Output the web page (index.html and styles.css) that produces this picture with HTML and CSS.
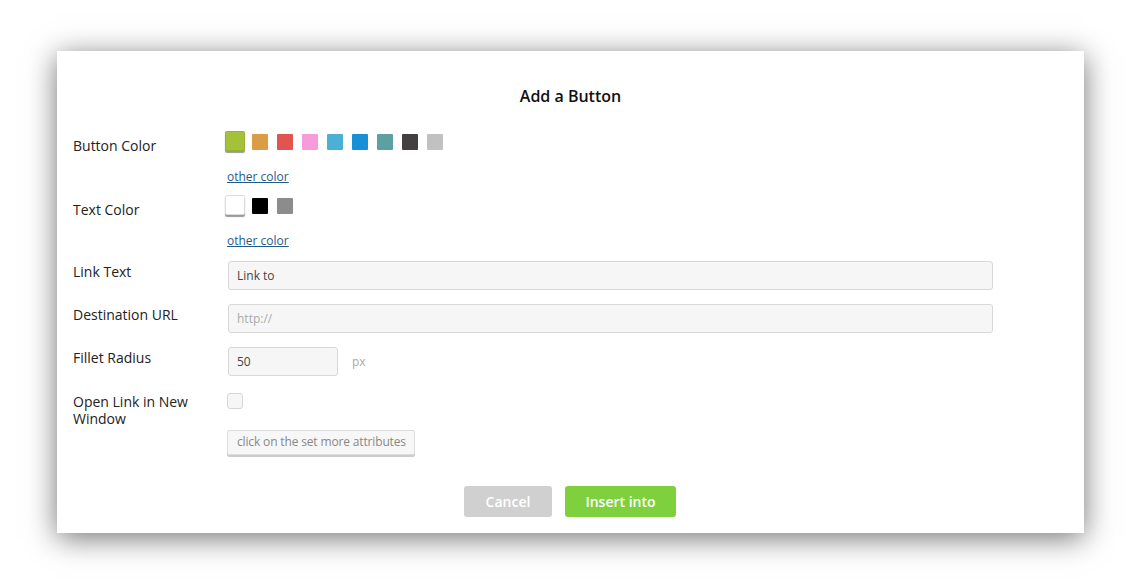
FILE: index.html
```html
<!DOCTYPE html>
<html>
<head>
<meta charset="utf-8">
<link rel="stylesheet" href="styles.css">
</head>
<body>
<div class="dialog">
  <h1 class="title">Add a Button</h1>
  <div class="row row-color">
    <div class="label">Button Color</div>
    <div class="field">
      <div class="swatches">
        <span class="sw selected" style="background:#a5c13a"></span>
        <span class="sw" style="background:#db9c45"></span>
        <span class="sw" style="background:#e1544f"></span>
        <span class="sw" style="background:#f79cdb"></span>
        <span class="sw" style="background:#4cb0d4"></span>
        <span class="sw" style="background:#1790d8"></span>
        <span class="sw" style="background:#5ea0a2"></span>
        <span class="sw" style="background:#444041"></span>
        <span class="sw" style="background:#c1c1c1"></span>
      </div>
      <a class="other" href="#">other color</a>
    </div>
  </div>
  <div class="row row-color row-color2">
    <div class="label">Text Color</div>
    <div class="field">
      <div class="swatches">
        <span class="sw selected white" style="background:#ffffff"></span>
        <span class="sw" style="background:#000000"></span>
        <span class="sw" style="background:#8c8c8c"></span>
      </div>
      <a class="other" href="#">other color</a>
    </div>
  </div>
  <div class="row row-input first-input">
    <div class="label">Link Text</div>
    <div class="field"><div class="input">Link to</div></div>
  </div>
  <div class="row row-input">
    <div class="label">Destination URL</div>
    <div class="field"><div class="input placeholder">http://</div></div>
  </div>
  <div class="row row-input">
    <div class="label">Fillet Radius</div>
    <div class="field inline"><div class="input small">50</div><span class="unit">px</span></div>
  </div>
  <div class="row row-check">
    <div class="label multi">Open Link in New Window</div>
    <div class="field"><span class="checkbox"></span></div>
  </div>
  <div class="row row-more">
    <div class="label"></div>
    <div class="field"><span class="more">click on the set more attributes</span></div>
  </div>
  <div class="actions">
    <span class="btn cancel">Cancel</span>
    <span class="btn insert">Insert into</span>
  </div>
</div>
</body>
</html>
```

FILE: styles.css
```css
html, body {
  margin: 0;
  padding: 0;
  background: #ffffff;
}
body {
  font-family: "Open Sans", "Liberation Sans", sans-serif;
  color: #222;
  padding-top: 51px;
  padding-bottom: 52px;
}
.dialog {
  margin-left: 57px;
  width: 1027px;
  height: 482px;
  box-sizing: border-box;
  background: #fff;
  box-shadow: 0 5px 28px rgba(0, 0, 0, 0.55);
  padding: 34px 0 0 16px;
}
.title {
  margin: 0 0 0 -16px;
  font-size: 16px;
  font-weight: 600;
  line-height: 22px;
  text-align: center;
  color: #111;
}
.row {
  display: flex;
}
.label {
  width: 155px;
  flex: none;
  font-size: 14px;
  line-height: 17px;
  color: #222;
}
.field {
  flex: none;
}
.row-color {
  margin-top: 24px;
}
.row-color .label {
  padding-top: 6px;
}
.row-color2 {
  margin-top: 10px;
}
.swatches {
  display: flex;
  align-items: flex-start;
  height: 22px;
  margin-left: -3px;
}
.sw {
  width: 16px;
  height: 16px;
  margin-top: 3px;
  margin-right: 9px;
  border-radius: 1px;
}
.sw.selected {
  width: 20px;
  height: 20px;
  margin-top: 0;
  margin-right: 7px;
  box-sizing: border-box;
  border: 1px solid rgba(0,0,0,0.08);
  box-shadow: 0 2px 1px #999;
  border-radius: 2px;
}
.sw.white {
  border: 1px solid #ddd;
}
.other {
  display: block;
  margin-top: 15px;
  margin-left: -1px;
  font-size: 12px;
  line-height: 17px;
  color: #1f5b8e;
  text-decoration: underline;
}
.row-input {
  margin-top: 14px;
}
.row-input.first-input {
  margin-top: 12px;
}
.row-input .label {
  padding-top: 2px;
}
.input {
  width: 765px;
  height: 29px;
  box-sizing: border-box;
  border: 1px solid #d8d8d8;
  border-radius: 3px;
  background: #f6f6f6;
  font-size: 12px;
  line-height: 27px;
  padding-left: 8px;
  color: #444;
}
.input.placeholder {
  color: #aaa;
}
.input.small {
  width: 110px;
}
.inline {
  display: flex;
  align-items: center;
}
.unit {
  margin-left: 14px;
  font-size: 12px;
  color: #aaa;
}
.row-check {
  margin-top: 17px;
}
.row-check .label {
  width: 140px;
  margin-right: 15px;
}
.checkbox {
  display: block;
  width: 16px;
  height: 16px;
  box-sizing: border-box;
  border: 1px solid #d6d6d6;
  border-radius: 3px;
  background: #f6f6f6;
  margin-left: -1px;
}
.row-more {
  margin-top: 2px;
}
.more {
  display: inline-block;
  margin-left: -1px;
  height: 25px;
  box-sizing: border-box;
  padding: 0 8px 0 9px;
  border: 1px solid #dcdcdc;
  border-radius: 2px;
  background: #f7f7f7;
  box-shadow: 0 2px 0 #ccc;
  font-size: 12px;
  line-height: 22px;
  color: #888;
  letter-spacing: -0.15px;
}
.actions {
  display: flex;
  justify-content: center;
  gap: 13px;
  margin-left: -17px;
  margin-top: 31px;
}
.btn {
  height: 31px;
  border-radius: 3px;
  color: #fff;
  font-size: 14px;
  font-weight: 600;
  line-height: 31px;
  text-align: center;
}
.cancel {
  width: 88px;
  background: #d0d0d0;
}
.insert {
  width: 111px;
  background: #7ed13c;
}
```
